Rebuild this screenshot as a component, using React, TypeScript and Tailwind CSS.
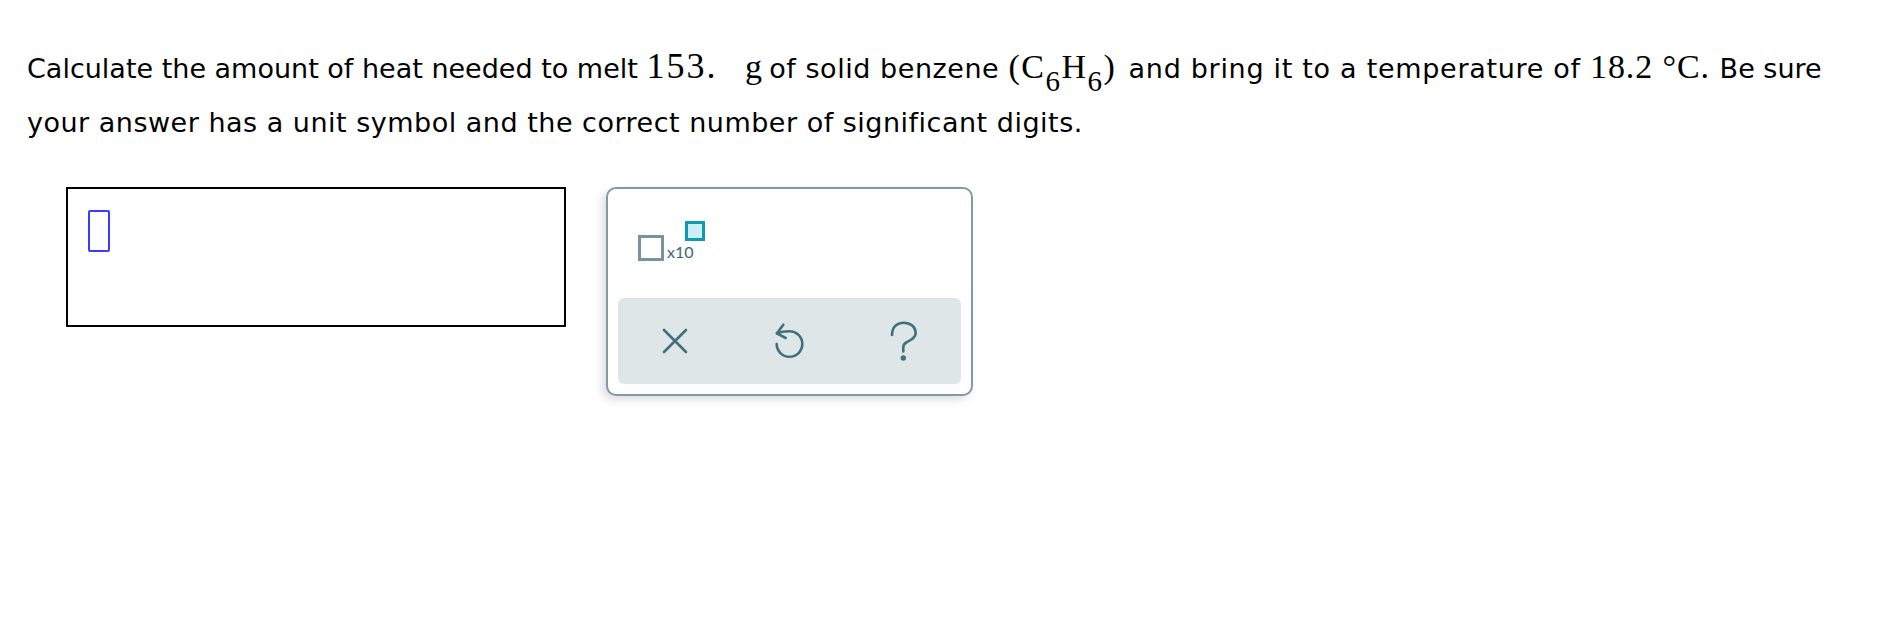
import React from 'react';

const serif = "font-['Liberation_Serif','Times_New_Roman',serif] text-[34px] leading-[0]";

const Sub: React.FC<{ children: React.ReactNode }> = ({ children }) => (
  <span className="relative top-[13px] text-[29px] leading-[0]">{children}</span>
);

const ToolIcon: React.FC<{ kind: 'clear' | 'undo' | 'help' }> = ({ kind }) => {
  if (kind === 'clear') {
    return (
      <svg width="26" height="26" viewBox="0 0 26 26" fill="none" stroke="#40707d" strokeWidth="2.6" strokeLinecap="round">
        <path d="M2 2 L24 24 M24 2 L2 24" />
      </svg>
    );
  }
  if (kind === 'undo') {
    return (
      <svg width="32" height="40" viewBox="0 0 32 40" fill="none" stroke="#40707d" strokeWidth="2.6" strokeLinecap="round" strokeLinejoin="round">
        <path d="M3.7 23 A12.8 12.8 0 1 0 16.5 10.2 C11 10.2 7 11 3.9 12.3" />
        <path d="M10.3 3.7 L3.9 12.3 L12.7 17" />
      </svg>
    );
  }
  return (
    <svg width="30" height="42" viewBox="0 0 30 42" fill="none" stroke="#40707d" strokeWidth="2.6" strokeLinecap="round">
      <path d="M3 15 C3 7 8 2.7 14.5 2.7 C21.5 2.7 26.7 7 26.7 13 C26.7 18 22 20 18 22 C15.5 23.3 14.3 25 14.3 27 V31.5" />
      <circle cx="14.3" cy="38" r="1.4" fill="#40707d" />
    </svg>
  );
};

const App: React.FC = () => {
  return (
    <div className="min-h-screen bg-white pl-[27px] pt-[42px] text-black">
      <p className="whitespace-nowrap font-['DejaVu_Sans','Verdana',sans-serif] text-[27px] leading-[54px]">
        Calculate the amount of heat needed to melt{' '}
        <span className="font-['Liberation_Serif','Times_New_Roman',serif] text-[36px] leading-[0] mr-[19px] tracking-[2px]">153.</span>{' '}
        <span className={`${serif} mr-[-2px]`}>g</span>
        <span className="tracking-[0.55px]"> of solid benzene </span>
        <span className={`${serif} mr-[3px] tracking-[1.5px]`}>
          (C<Sub>6</Sub>H<Sub>6</Sub>)
        </span>
        <span className="tracking-[0.7px]"> and bring it to a temperature of </span>
        <span className={`${serif} mr-[1px] tracking-[0.9px]`}>18.2 °C.</span> Be sure
        <br />
        <span className="tracking-[0.5px]">
          your answer has a unit symbol and the correct number of significant digits.
        </span>
      </p>

      <div className="mt-[37px] ml-[39px] flex items-start gap-[40px]">
        <div className="h-[140px] w-[500px] border-2 border-black pl-[20px] pt-[21px]">
          <div className="h-[42px] w-[22px] rounded-[2px] border-2 border-[#3b3bff]" />
        </div>

        <div className="flex h-[209px] w-[367px] flex-col rounded-[10px] border-2 border-[#7f9ca4] bg-white p-[10px] shadow-[-4px_4px_8px_rgba(0,0,0,0.13)]">
          <div className="h-[99px] pl-[20px] pt-[24px]">
            <div className="flex items-end">
              <div className="mt-[12px] h-[26px] w-[26px] border-[3px] border-[#78939b]" />
              <div className="relative ml-[3px] font-['Lato',sans-serif] text-[16px] leading-[18px] text-[#3d6470]">
                x10
                <div className="absolute left-[18px] top-[-22px] h-[20px] w-[20px] border-[3px] border-[#0e9ab0] bg-[#cdeef3]" />
              </div>
            </div>
          </div>
          <div className="grid h-[87px] grid-cols-3 items-center justify-items-center rounded-[6px] bg-[#dfe6e8]">
            <ToolIcon kind="clear" />
            <ToolIcon kind="undo" />
            <ToolIcon kind="help" />
          </div>
        </div>
      </div>
    </div>
  );
};

export default App;
